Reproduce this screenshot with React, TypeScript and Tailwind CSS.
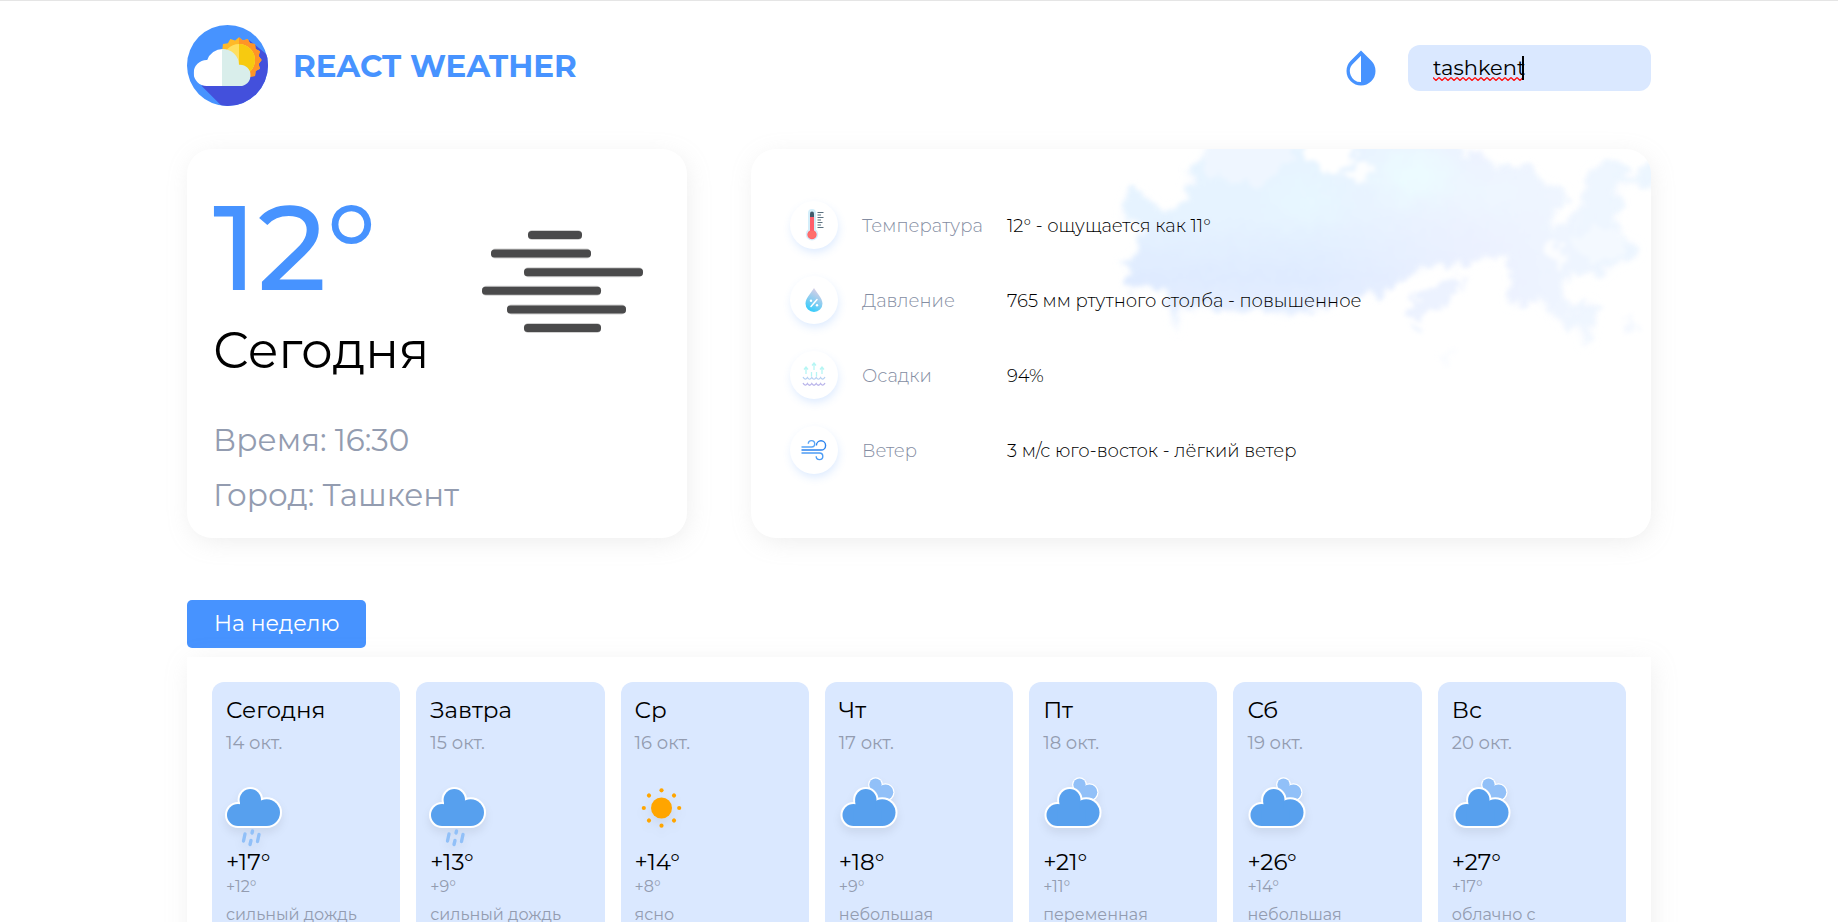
import React from "react";

type Kind = "rain" | "sun" | "cloudy";

interface Day {
  day: string;
  date: string;
  kind: Kind;
  high: string;
  low: string;
  info: string;
}

const days: Day[] = [
  { day: "Сегодня", date: "14 окт.", kind: "rain", high: "+17°", low: "+12°", info: "сильный дождь" },
  { day: "Завтра", date: "15 окт.", kind: "rain", high: "+13°", low: "+9°", info: "сильный дождь" },
  { day: "Ср", date: "16 окт.", kind: "sun", high: "+14°", low: "+8°", info: "ясно" },
  { day: "Чт", date: "17 окт.", kind: "cloudy", high: "+18°", low: "+9°", info: "небольшая" },
  { day: "Пт", date: "18 окт.", kind: "cloudy", high: "+21°", low: "+11°", info: "переменная" },
  { day: "Сб", date: "19 окт.", kind: "cloudy", high: "+26°", low: "+14°", info: "небольшая" },
  { day: "Вс", date: "20 окт.", kind: "cloudy", high: "+27°", low: "+17°", info: "облачно с" },
];

const sunPoints = Array.from({ length: 32 }, (_, i) => {
  const r = i % 2 === 0 ? 68 : 60;
  const a = (i * Math.PI) / 16;
  return `${156 + r * Math.sin(a)},${105 - r * Math.cos(a)}`;
}).join(" ");

function Logo() {
  return (
    <svg viewBox="0 0 243 243" className="size-[81px] shrink-0" aria-hidden="true">
      <defs>
        <clipPath id="logo-disc">
          <circle cx="121.5" cy="121.5" r="121.5" />
        </clipPath>
        <clipPath id="logo-right">
          <rect x="156" y="0" width="100" height="243" />
        </clipPath>
        <clipPath id="logo-cloud">
          <circle cx="59" cy="144" r="39" />
          <circle cx="107" cy="121" r="49" />
          <circle cx="159" cy="151" r="32" />
          <rect x="59" y="125" width="100" height="58" />
        </clipPath>
      </defs>
      <g clipPath="url(#logo-disc)">
        <rect width="243" height="243" fill="#4793ff" />
        <path d="M44 183L110 249H260V105L186 45L100 120Z" fill="#4350dc" />
        <polygon points={sunPoints} fill="#ffb928" />
        <polygon points={sunPoints} fill="#ff9426" clipPath="url(#logo-right)" />
        <circle cx="156" cy="105" r="48" fill="#ffdf60" />
        <circle cx="156" cy="105" r="48" fill="#f7ca10" clipPath="url(#logo-right)" />
        <g clipPath="url(#logo-cloud)">
          <rect width="105" height="243" fill="#fff" />
          <rect x="105" width="138" height="243" fill="#d9eeeb" />
        </g>
      </g>
    </svg>
  );
}

function Mist() {
  const bars = [
    [46, 54],
    [9, 100],
    [42, 119],
    [0, 119],
    [25, 119],
    [42, 77],
  ];
  return (
    <svg viewBox="0 0 162 106" className="mt-[43px] h-[106px] w-[162px] shrink-0" role="img" aria-label="Туман">
      {bars.map(([x, w], i) => (
        <g key={i}>
          <rect x={x} y={i * 18.6} width={w} height="10" rx="4.5" fill="#4a4a4b" fillOpacity="0.25" />
          <rect x={x} y={1 + i * 18.6} width={w} height="8" rx="3.5" fill="#4a4a4b" />
        </g>
      ))}
    </svg>
  );
}

const skyOutline =
  "M457 -10L450 12L436 22L440 30L432 42L441 48L432 60L424 58L415 66L405 58L396 50L388 44L380 38L374 52L370 66L390 74L386 90L391 100L378 112L366 114L380 120L376 140L392 138L404 136L418 150L421 170L428 186L427 162L445 158L470 160L487 163L510 160L535 168L545 164L575 161L590 152L606 148L614 142L630 148L645 132L665 124L690 114L700 118L735 108L755 106L762 128L756 154L768 158L785 146L795 160L815 176L830 180L832 198L840 192L842 178L846 160L840 152L825 160L812 150L810 134L822 124L840 122L850 130L858 120L870 112L884 110L888 98L870 88L864 72L872 50L861 38L880 34L910 40V4L886 26L878 30L872 18L862 12L850 18L838 22L836 40L830 58L815 74L806 82L799 76L806 60L816 44L810 40L794 36L784 28L776 16L765 21L750 20L738 12L730 4L712 7L705 -10Z";

function Sky() {
  return (
    <svg
      viewBox="360 0 540 220"
      className="pointer-events-none absolute top-0 right-0 h-[220px] w-[540px]"
      aria-hidden="true"
    >
      <defs>
        <linearGradient id="sky-fill" gradientUnits="userSpaceOnUse" x1="0" y1="0" x2="0" y2="190">
          <stop offset="0" stopColor="#e7f4ff" />
          <stop offset="0.35" stopColor="#e6f3ff" />
          <stop offset="0.68" stopColor="#dfebff" />
          <stop offset="0.82" stopColor="#e4eeff" />
          <stop offset="1" stopColor="#f8fbff" />
        </linearGradient>
        <linearGradient id="sky-fade" gradientUnits="userSpaceOnUse" x1="560" y1="0" x2="900" y2="0">
          <stop offset="0" stopColor="#eff2ff" stopOpacity="0" />
          <stop offset="0.5" stopColor="#eff2ff" stopOpacity="0.75" />
          <stop offset="0.75" stopColor="#f0f6ff" stopOpacity="0.9" />
          <stop offset="1" stopColor="#edf6ff" stopOpacity="0.9" />
        </linearGradient>
        <filter
          id="sky-rough"
          filterUnits="userSpaceOnUse"
          x="340"
          y="-20"
          width="600"
          height="260"
          colorInterpolationFilters="sRGB"
        >
          <feTurbulence type="fractalNoise" baseFrequency="0.08" numOctaves="5" seed="11" result="n" />
          <feDisplacementMap in="SourceGraphic" in2="n" scale="24" xChannelSelector="R" yChannelSelector="G" />
          <feGaussianBlur stdDeviation="2" />
        </filter>
        <filter id="sky-haze" filterUnits="userSpaceOnUse" x="340" y="-20" width="600" height="260">
          <feGaussianBlur stdDeviation="5" />
        </filter>
        <filter id="sky-soft" x="-60%" y="-100%" width="220%" height="300%">
          <feGaussianBlur stdDeviation="14" />
        </filter>
        <clipPath id="sky-clip">
          <path d={skyOutline} />
        </clipPath>
      </defs>
      <path d={skyOutline} fill="#e8f1ff" fillOpacity="0.35" filter="url(#sky-haze)" />
      <g filter="url(#sky-rough)">
        <path d={skyOutline} fill="url(#sky-fill)" />
        <path d={skyOutline} fill="url(#sky-fade)" />
        <g clipPath="url(#sky-clip)">
          <g filter="url(#sky-soft)">
            <ellipse cx="665" cy="26" rx="38" ry="22" fill="#ecfdff" />
            <ellipse cx="555" cy="52" rx="34" ry="18" fill="#e8f9ff" fillOpacity="0.8" />
            <ellipse cx="740" cy="45" rx="40" ry="14" fill="#eef8ff" />
          </g>
          <path d="M462 -10H548L540 14L522 30L506 38L486 32L468 34L456 24L452 8Z" fill="#f2f6ff" fillOpacity="0.7" />
          <path d="M822 90L846 78L862 74L874 92L872 106L846 112L826 106Z" fill="#f5faff" fillOpacity="0.8" />
        </g>
        <path d="M546 -14L554 6L568 12L573 26L588 22L600 12L606 -14Z" fill="#fff" />
        <path d="M590 30L604 17L618 10L624 22L612 34L600 31Z" fill="#fdfeff" />
        <path d="M790 98L804 96L818 110L812 118L798 108Z" fill="#fff" fillOpacity="0.8" />
        <path d="M655 164L660 150L680 142L695 127L703 134L700 150L685 160L668 168Z" fill="#ecf2ff" />
        <path d="M658 176L672 174L670 184L660 182Z" fill="#edf4ff" />
        <path d="M708 130L714 128L714 142L708 142Z" fill="#f1f5ff" />
        <path d="M876 168L884 160L884 176L878 184Z" fill="#f4f8ff" />
        <path d="M690 206L706 200L704 208L692 212Z" fill="#fafcff" />
      </g>
    </svg>
  );
}

function Thermometer() {
  return (
    <svg viewBox="0 0 28 32" className="h-8 w-7" aria-hidden="true">
      <path d="M8 4a4 4 0 0 1 8 0v16.5a6.2 6.2 0 1 1-8 0z" fill="#d4eefa" />
      <path d="M10 4.500a2 2 0 0 1 4 0V9h-4z" fill="#40596b" />
      <path d="M10 8h4v13.400a4.600 4.600 0 1 1-4 0z" fill="#ff5d6c" />
      <circle cx="12" cy="25.600" r="4" fill="#ff6f6b" />
      <path
        d="M17.500 3.500h6M17.500 6h3.500M17.500 8.500h6M17.500 11h3.500M17.500 13.500h5M17.500 16h3.500M17.500 18.500h6"
        stroke="#5a7080"
        strokeWidth="1"
      />
    </svg>
  );
}

function Drop() {
  return (
    <svg viewBox="0 0 18 26" className="h-[26px] w-[18px]" aria-hidden="true">
      <defs>
        <linearGradient id="drop-fill" x1="0.7" y1="0" x2="0.3" y2="1">
          <stop offset="0" stopColor="#e3cfe4" />
          <stop offset="0.5" stopColor="#8fcdf0" />
          <stop offset="1" stopColor="#2dccfc" />
        </linearGradient>
      </defs>
      <path d="M9 1C11 5 17.500 11 17.500 16.500a8.500 8.500 0 0 1-17 0C.5 11 7 5 9 1z" fill="url(#drop-fill)" />
      <path d="M6 19.500L12 12.500" stroke="#fff" strokeWidth="1.500" strokeLinecap="round" />
      <circle cx="6" cy="13.800" r="1.200" fill="#fff" />
      <circle cx="12" cy="18.300" r="1.200" fill="#fff" />
    </svg>
  );
}

function Vapor() {
  return (
    <svg viewBox="0 0 24 26" className="h-[26px] w-6" fill="none" aria-hidden="true">
      <path
        d="M4 12V6M2 7.500L4 5l2 2.500M12 8V2M10 3.500L12 1l2 2.500M20 12V6M18 7.500L20 5l2 2.500M9.500 10v4.500M14.500 10v4.500"
        stroke="#b6f6f4"
        strokeWidth="1.300"
      />
      <path
        d="M1 15q2.200 4 4.400 0.500q2.200 3.500 4.400 0q2.200 3.500 4.400 0q2.200 3.500 4.400 0q2.200 3.500 4.400-.5"
        stroke="#b4cff2"
        strokeWidth="1.200"
      />
      <path
        d="M1 21q2.200 4 4.400 0.500q2.200 3.500 4.400 0q2.200 3.500 4.400 0q2.200 3.500 4.400 0q2.200 3.500 4.400-.5"
        stroke="#b9b4ea"
        strokeWidth="1.300"
      />
    </svg>
  );
}

function Wind() {
  return (
    <svg viewBox="0 0 28 24" className="h-6 w-7" fill="none" strokeWidth="1.400" aria-hidden="true">
      <path d="M1.500 9H11.500a3.200 3.200 0 1 0-3.200-3.200" stroke="#5aa5f6" />
      <path d="M1.500 12H21a4.600 4.600 0 1 0-4.600-4.600" stroke="#2b83ee" />
      <path d="M1.500 15H19.500a3.300 3.300 0 1 1-3.300 3.300" stroke="#4d9cf5" />
    </svg>
  );
}

function CloudBody({ dx }: { dx: number }) {
  const lobes = (
    <>
      <circle cx="12" cy="44" r="11" />
      <circle cx="24.300" cy="28.800" r="10.700" />
      <circle cx="40.700" cy="41.600" r="13.300" />
      <path d="M12 38h28v17H12zM14 30h20v12H14z" strokeWidth="0" />
      <path d="M12 55h28" strokeWidth="4" />
    </>
  );
  return (
    <g transform={`translate(${dx} 0)`}>
      <g fill="#fff" stroke="#fff" strokeWidth="4">
        {lobes}
      </g>
      <g fill="#57a0ee">{lobes}</g>
    </g>
  );
}

function DayIcon({ kind }: { kind: Kind }) {
  return (
    <svg
      viewBox="0 0 64 76"
      className="mt-4 h-[76px] w-16 overflow-visible drop-shadow-[0_5px_4px_rgba(0,0,0,0.07)]"
      aria-hidden="true"
    >
      {kind === "rain" && (
        <>
          <CloudBody dx={0} />
          <path
            d="M19 63L17.500 70M26.500 60L26 62M25 69.500L24 73.500M33 63.500L31.500 70.500"
            stroke="#91c0f8"
            strokeWidth="3.400"
            strokeLinecap="round"
          />
        </>
      )}
      {kind === "sun" && (
        <g fill="#ffa500">
          <circle cx="26.500" cy="37" r="10.500" />
          {[0, 45, 90, 135, 180, 225, 270, 315].map((a) => (
            <circle key={a} cx="26.500" cy="19.300" r="2.100" transform={`rotate(${a} 26.5 37)`} />
          ))}
        </g>
      )}
      {kind === "cloudy" && (
        <>
          <g fill="#fff">
            <circle cx="36.500" cy="13.700" r="7.400" />
            <circle cx="46.500" cy="21.300" r="9" />
          </g>
          <g fill="#91c0f8">
            <circle cx="36.500" cy="13.700" r="6.200" />
            <circle cx="46.500" cy="21.300" r="7.800" />
            <path d="M33 15h12v12H33z" />
          </g>
          <CloudBody dx={2.5} />
        </>
      )}
    </svg>
  );
}

const details = [
  { icon: <Thermometer />, name: "Температура", value: "12° - ощущается как 11°" },
  { icon: <Drop />, name: "Давление", value: "765 мм ртутного столба - повышенное" },
  { icon: <Vapor />, name: "Осадки", value: "94%" },
  { icon: <Wind />, name: "Ветер", value: "3 м/с юго-восток - лёгкий ветер" },
];

export default function App() {
  return (
    <div className="border-t border-[#e5e5e5] bg-white font-['Montserrat',Inter,sans-serif] text-black">
      <div className="mx-auto max-w-[1464px]">
        <header className="flex items-center justify-between pt-6 pb-[43px]">
          <div className="flex items-center gap-[25px]">
            <Logo />
            <h1 className="text-[31px] leading-10 font-bold text-[#4793ff] uppercase">React weather</h1>
          </div>
          <div className="flex items-center gap-8 pt-1">
            <button type="button" aria-label="Сменить тему">
              <svg viewBox="0 0 30 36" className="h-9 w-[30px]" aria-hidden="true">
                <path
                  d="M15 0.500L25.300 10.800A14.500 14.500 0 1 1 4.700 10.800ZM15 5.800L7.500 13.200A10.800 10.800 0 0 0 15 32Z"
                  fill="#4793ff"
                  fillRule="evenodd"
                />
              </svg>
            </button>
            <div className="relative">
              <input
                type="text"
                aria-label="Город"
                defaultValue="tashkent"
                spellCheck={false}
                className="h-[46px] w-[243px] rounded-xl bg-[#dae8ff] pl-[25px] text-[21px] outline-none"
              />
              <svg className="absolute bottom-2.5 left-[25px] h-1 w-[90px]" aria-hidden="true">
                <defs>
                  <pattern id="wave" width="6" height="4" patternUnits="userSpaceOnUse">
                    <path d="M0 0.500L3 3.500L6 0.500" fill="none" stroke="#f11" strokeWidth="1.300" />
                  </pattern>
                </defs>
                <rect width="90" height="4" fill="url(#wave)" />
              </svg>
              <span className="absolute top-[11px] left-[114px] h-6 w-0.5 bg-black" />
            </div>
          </div>
        </header>

        <main>
          <div className="grid grid-cols-[5fr_9fr] gap-16">
            <section className="rounded-[25px] bg-white px-[26px] pt-[38px] pb-[23px] shadow-[2px_5px_25px_-3px_rgba(180,180,180,0.25)]">
              <div className="flex justify-between pr-[17px]">
                <div>
                  <div className="text-[120px] leading-[120px] font-medium text-[#4793ff]">12°</div>
                  <div className="mt-3.5 text-[50px] leading-[60px]">Сегодня</div>
                </div>
                <Mist />
              </div>
              <div className="mt-[39px] text-[31px] leading-10 text-[#939cb0]">
                Время: <span>16:30</span>
              </div>
              <div className="mt-[15px] text-[31px] leading-10 text-[#939cb0]">
                Город: <span>Ташкент</span>
              </div>
            </section>

            <section className="relative rounded-[25px] bg-white shadow-[2px_5px_25px_-3px_rgba(180,180,180,0.25)]">
              <div className="absolute inset-0 overflow-hidden rounded-[25px]">
                <Sky />
              </div>
              <dl className="relative flex flex-col gap-[27px] px-[39px] pt-[52px]">
                {details.map((d) => (
                  <div key={d.name} className="flex items-center">
                    <div className="mr-6 flex size-12 shrink-0 items-center justify-center rounded-full bg-white shadow-[1px_4px_10px_-1px_rgba(71,147,255,0.2)]">
                      {d.icon}
                    </div>
                    <dt className="w-[145px] pt-0.5 text-[18px] leading-6 font-light text-[#848da2]">{d.name}</dt>
                    <dd className="pt-0.5 text-[18px] leading-6 font-light">{d.value}</dd>
                  </div>
                ))}
              </dl>
            </section>
          </div>

          <button
            type="button"
            className="mt-[62px] block h-12 rounded-[5px] bg-[#4793ff] px-[27px] text-[22px] leading-8 text-white"
          >
            На неделю
          </button>

          <section className="mt-[9px] grid grid-cols-7 gap-4 bg-white p-[25px] shadow-[2px_5px_25px_-3px_rgba(180,180,180,0.25)]">
            {days.map((d) => (
              <article key={d.date} className="rounded-xl bg-[#dae8ff] px-3.5 pt-3.5 pb-6">
                <h2 className="text-[23px] leading-7">{d.day}</h2>
                <p className="mt-[7px] text-[18px] leading-6 text-[#939cb0]">{d.date}</p>
                <DayIcon kind={d.kind} />
                <p className="mt-px text-[23px] leading-7">{d.high}</p>
                <p className="mt-px text-[16px] leading-5 text-[#939cb0]">{d.low}</p>
                <p className="mt-1.5 text-[16px] leading-6 text-[#939cb0]">{d.info}</p>
              </article>
            ))}
          </section>
        </main>
      </div>
    </div>
  );
}
